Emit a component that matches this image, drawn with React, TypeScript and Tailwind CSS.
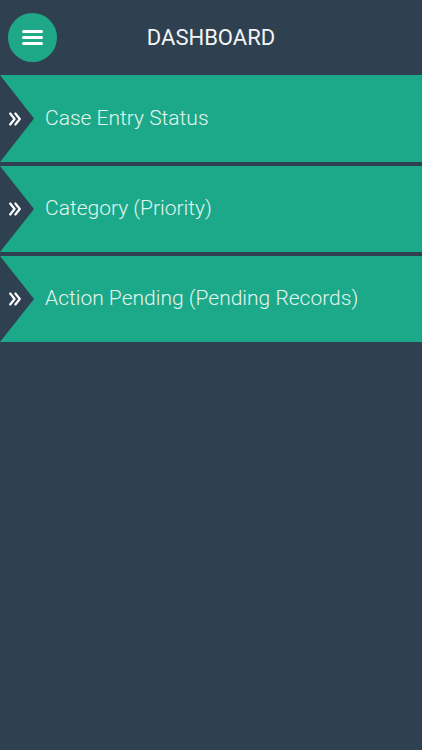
const items = [
  "Case Entry Status",
  "Category (Priority)",
  "Action Pending (Pending Records)",
];

function Chevrons() {
  return (
    <svg width="12" height="14" viewBox="0 0 12 14" fill="none" stroke="white" strokeWidth="2.2" strokeLinecap="round" strokeLinejoin="round">
      <path d="M1.2 1.5 L5.6 7 L1.2 12.5" />
      <path d="M6.4 1.5 L10.8 7 L6.4 12.5" />
    </svg>
  );
}

export default function App() {
  return (
    <div className="min-h-screen w-full bg-[#2f4050] font-['Roboto',sans-serif]">
      {/* Header */}
      <header className="flex h-[75px] items-center">
        <div className="flex w-[57px] justify-end">
          <button className="flex h-[49px] w-[49px] flex-col items-center justify-center gap-[2.5px] rounded-full bg-[#1ea887]">
            <span className="h-[3.5px] w-[21px] rounded-full bg-white" />
            <span className="h-[3.5px] w-[21px] rounded-full bg-white" />
            <span className="h-[3.5px] w-[21px] rounded-full bg-white" />
          </button>
        </div>
        <h1 className="flex-1 text-center text-[22px] text-[#f2f4f5]">DASHBOARD</h1>
        <div className="w-[57px]" />
      </header>

      {/* Menu */}
      <ul className="flex flex-col gap-[4px]">
        {items.map((label, i) => (
          <li key={label} className={`flex items-center bg-[#1ba98a] ${i === 0 ? "h-[87px]" : "h-[86px]"}`}>
            <div className="relative h-full w-[34px] shrink-0">
              <svg className="h-full w-full" viewBox="0 0 34 86" preserveAspectRatio="none">
                <polygon points="0,0 34,43 0,86" fill="#2f4050" />
              </svg>
              <div className="absolute left-[9px] top-1/2 -translate-y-1/2">
                <Chevrons />
              </div>
            </div>
            <span className="ml-[11px] text-[21px] font-light text-[#e3f4ee]">{label}</span>
          </li>
        ))}
      </ul>
    </div>
  );
}
